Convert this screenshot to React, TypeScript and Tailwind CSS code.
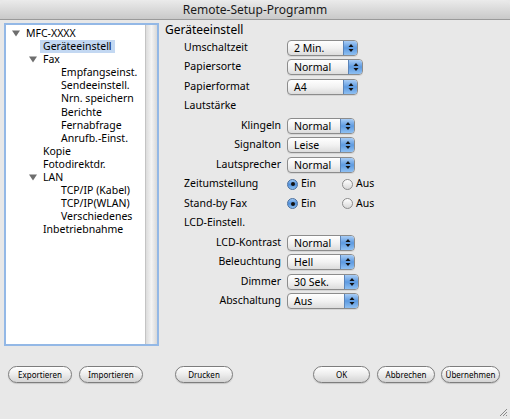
import React from "react";

const font = { fontFamily: '"Noto Sans", "DejaVu Sans", sans-serif' };

function Popup({ value, w }: { value: string; w: number }) {
  return (
    <div
      className="flex h-[16px] items-stretch rounded-[4px] border border-[#8c8c8c] bg-gradient-to-b from-[#ffffff] via-[#f2f2f2] to-[#dcdcdc] shadow-[0_1px_0_rgba(0,0,0,0.08)] overflow-hidden"
      style={{ width: w }}
    >
      <div className="flex-1 pl-[6px] text-[10.5px] leading-[14px] text-black">{value}</div>
      <div className="w-[14px] border-l border-[#5b84b8] bg-gradient-to-b from-[#a9cdf5] via-[#5d9ae0] to-[#8fc0f2] flex items-center justify-center">
        <svg width="6" height="10" viewBox="0 0 6 10">
          <path d="M0.5 4 L3 1 L5.5 4 Z" fill="#111" />
          <path d="M0.5 6 L3 9 L5.5 6 Z" fill="#111" />
        </svg>
      </div>
    </div>
  );
}

function Radio({ on, label }: { on: boolean; label: string }) {
  return (
    <div className="flex items-center gap-[3px]">
      {on ? (
        <div className="w-[11px] h-[11px] rounded-full border border-[#4a6f9e] bg-gradient-to-b from-[#9cc6f3] via-[#4f8fdb] to-[#8ec0f0] flex items-center justify-center">
          <div className="w-[4px] h-[4px] rounded-full bg-[#111]" />
        </div>
      ) : (
        <div className="w-[11px] h-[11px] rounded-full border border-[#8c8c8c] bg-gradient-to-b from-[#ffffff] to-[#d8d8d8]" />
      )}
      <span className="text-[10.5px] text-black">{label}</span>
    </div>
  );
}

function Row({
  label,
  nested,
  children,
}: {
  label: string;
  nested?: boolean;
  children?: React.ReactNode;
}) {
  return (
    <div className="flex items-center h-[19.5px]">
      <div className={`w-[97px] text-[10.5px] text-black ${nested ? "text-right" : "text-left"}`}>{label}</div>
      <div className="ml-[6px] flex items-center">{children}</div>
    </div>
  );
}

function Btn({ label, w }: { label: string; w: number }) {
  return (
    <div
      className="h-[17px] rounded-full border border-[#7d7d7d] bg-gradient-to-b from-[#ffffff] via-[#ececec] to-[#d4d4d4] flex items-center justify-center text-[8px] text-black shadow-[0_1px_1px_rgba(0,0,0,0.15)]"
      style={{ width: w }}
    >
      {label}
    </div>
  );
}

const tree: { t: string; x: number; tri?: boolean; sel?: boolean }[] = [
  { t: "MFC-XXXX", x: 27, tri: true },
  { t: "Geräteeinstell", x: 44, sel: true },
  { t: "Fax", x: 44, tri: true },
  { t: "Empfangseinst.", x: 62 },
  { t: "Sendeeinstell.", x: 62 },
  { t: "Nrn. speichern", x: 62 },
  { t: "Berichte", x: 62 },
  { t: "Fernabfrage", x: 62 },
  { t: "Anrufb.-Einst.", x: 62 },
  { t: "Kopie", x: 44 },
  { t: "Fotodirektdr.", x: 44 },
  { t: "LAN", x: 44, tri: true },
  { t: "TCP/IP (Kabel)", x: 62 },
  { t: "TCP/IP(WLAN)", x: 62 },
  { t: "Verschiedenes", x: 62 },
  { t: "Inbetriebnahme", x: 44 },
];

export default function App() {
  return (
    <div className="w-[510px] h-[419px] bg-[#e8e8e8] relative overflow-hidden" style={font}>
      {/* title bar */}
      <div className="h-[20px] rounded-t-[5px] bg-gradient-to-b from-[#ebebeb] to-[#c9c9c9] border-b border-[#9a9a9a] flex items-center justify-center">
        <span className="text-[12px] text-[#1a1a1a]">Remote-Setup-Programm</span>
      </div>

      <div className="flex">
        {/* tree panel */}
        <div className="ml-[4px] mt-[3px] w-[155px] h-[323px] border-[2px] border-[#93b8e6] bg-white flex">
          <div className="flex-1 pt-[2px]">
            {tree.map((r, i) => (
              <div key={i} className="relative h-[13.1px]">
                {r.tri && (
                  <svg
                    className="absolute top-[3px]"
                    style={{ left: r.x - 21 }}
                    width="8"
                    height="7"
                    viewBox="0 0 8 7"
                  >
                    <path d="M0 0.5 L8 0.5 L4 6.5 Z" fill="#6e6e6e" />
                  </svg>
                )}
                <span
                  className={`absolute top-0 text-[10.5px] leading-[13px] text-black whitespace-nowrap ${
                    r.sel ? "bg-[#c3d8f2] px-[3px]" : ""
                  }`}
                  style={{ left: r.sel ? r.x - 10 : r.x - 7 }}
                >
                  {r.t}
                </span>
              </div>
            ))}
          </div>
          <div className="w-[12px] border-l border-[#c4c4c4] bg-gradient-to-r from-[#dcdcdc] via-[#f4f4f4] to-[#d8d8d8]" />
        </div>

        {/* right content */}
        <div className="ml-[6px] pt-[2px]">
          <div className="h-[16px] text-[12px] leading-[16px] text-black">Geräteeinstell</div>
          <div className="pl-[19px]">
            <Row label="Umschaltzeit">
              <Popup value="2 Min." w={71} />
            </Row>
            <Row label="Papiersorte">
              <Popup value="Normal" w={76} />
            </Row>
            <Row label="Papierformat">
              <Popup value="A4" w={71} />
            </Row>
            <Row label="Lautstärke" />
            <Row label="Klingeln" nested>
              <Popup value="Normal" w={68} />
            </Row>
            <Row label="Signalton" nested>
              <Popup value="Leise" w={68} />
            </Row>
            <Row label="Lautsprecher" nested>
              <Popup value="Normal" w={68} />
            </Row>
            <Row label="Zeitumstellung">
              <div className="flex items-center">
                <div className="w-[55px]">
                  <Radio on label="Ein" />
                </div>
                <Radio on={false} label="Aus" />
              </div>
            </Row>
            <Row label="Stand-by Fax">
              <div className="flex items-center">
                <div className="w-[55px]">
                  <Radio on label="Ein" />
                </div>
                <Radio on={false} label="Aus" />
              </div>
            </Row>
            <Row label="LCD-Einstell." />
            <Row label="LCD-Kontrast" nested>
              <Popup value="Normal" w={68} />
            </Row>
            <Row label="Beleuchtung" nested>
              <Popup value="Hell" w={68} />
            </Row>
            <Row label="Dimmer" nested>
              <Popup value="30 Sek." w={72} />
            </Row>
            <Row label="Abschaltung" nested>
              <Popup value="Aus" w={72} />
            </Row>
          </div>
        </div>
      </div>

      {/* bottom buttons */}
      <div className="flex items-center mt-[20px] pl-[8px]">
        <Btn label="Exportieren" w={64} />
        <div className="ml-[7px]">
          <Btn label="Importieren" w={64} />
        </div>
        <div className="ml-[32px]">
          <Btn label="Drucken" w={58} />
        </div>
        <div className="ml-[80px]">
          <Btn label="OK" w={57} />
        </div>
        <div className="ml-[7px]">
          <Btn label="Abbrechen" w={58} />
        </div>
        <div className="ml-[6px]">
          <Btn label="Übernehmen" w={59} />
        </div>
      </div>

      {/* resize grip */}
      <svg className="absolute right-[2px] bottom-[2px]" width="10" height="10" viewBox="0 0 10 10">
        <path d="M9 2 L2 9 M9 5 L5 9 M9 8 L8 9" stroke="#8a8a8a" strokeWidth="1" />
      </svg>
    </div>
  );
}
